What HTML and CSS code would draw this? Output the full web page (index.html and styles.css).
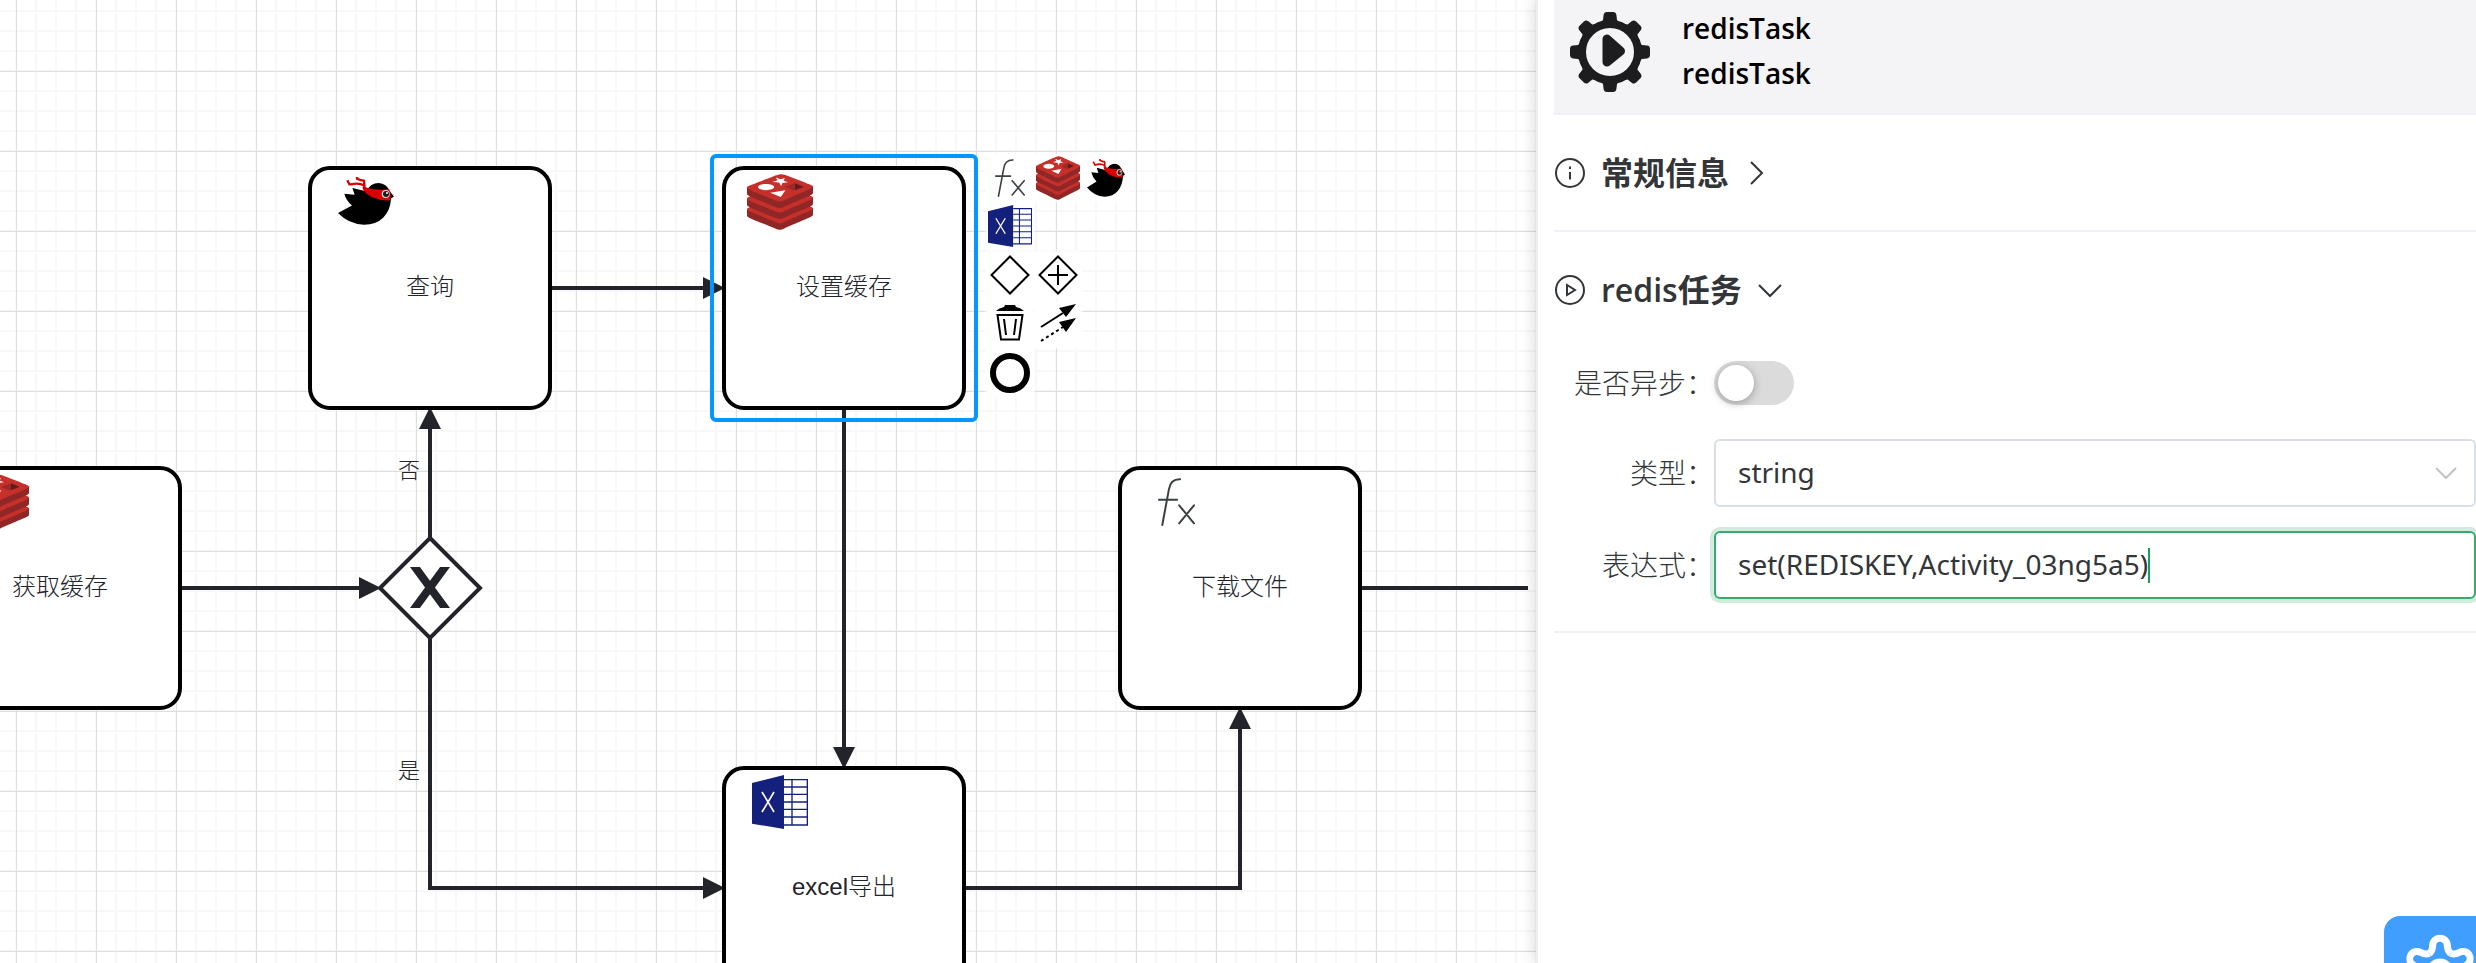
FILE: index.html
```html
<!DOCTYPE html>
<html lang="zh-CN">
<head>
<meta charset="utf-8">
<title>redisTask</title>
<link rel="stylesheet" href="styles.css">
</head>
<body>
<svg class="sprite" aria-hidden="true">
  <symbol id="i-redis" viewBox="0 0 256 220" preserveAspectRatio="none">
    <g id="redis-layer">
      <path fill="#912626" d="M245.97 168.943c-13.662 7.121-84.434 36.22-99.501 44.075-15.067 7.856-23.437 7.78-35.34 2.09-11.902-5.69-87.216-36.112-100.783-42.597C3.566 169.271 0 166.535 0 163.951v-25.876s98.05-21.345 113.879-27.024c15.828-5.679 21.32-5.884 34.79-.95 13.472 4.936 94.018 19.468 107.331 24.344l-.006 25.51c.002 2.558-3.07 5.364-10.024 8.988"/>
      <path fill="#c6302b" d="M245.965 143.22c-13.661 7.118-84.431 36.218-99.498 44.072-15.066 7.857-23.436 7.78-35.338 2.09-11.903-5.686-87.214-36.113-100.78-42.594-13.566-6.485-13.85-10.948-.524-16.166 13.326-5.22 88.224-34.605 104.055-40.284 15.828-5.677 21.319-5.884 34.789-.948 13.471 4.934 83.819 32.935 97.13 37.81 13.316 4.881 13.827 8.9.166 16.02"/>
    </g>
    <use href="#redis-layer" y="-42"/>
    <use href="#redis-layer" y="-85"/>
    <path fill="#fff" d="M159.283 32.757l-22.01 2.285-4.927 11.856-7.958-13.23-25.415-2.284 18.964-6.839-5.69-10.498 17.755 6.944 16.738-5.48-4.524 10.855 17.067 6.391M131.032 90.275L89.955 73.238l58.86-9.035-17.783 26.072M74.082 39.347c17.375 0 31.46 5.46 31.46 12.194 0 6.736-14.085 12.195-31.46 12.195s-31.46-5.46-31.46-12.195c0-6.734 14.085-12.194 31.46-12.194"/>
    <path fill="#621b1c" d="M185.295 35.998l34.836 13.766-34.806 13.753-.03-27.52"/>
    <path fill="#9a2928" d="M146.755 51.243l38.54-15.245.03 27.519-3.779 1.478-34.791-13.752"/>
  </symbol>
  <symbol id="i-bird" viewBox="0 0 168 147" preserveAspectRatio="none">
    <path d="M0 110L42 87Q24 72 19 51L50 54L43 34L84 44Q98 18 122 18Q146 20 154 42L168 60L159 66Q158 100 137 123Q115 146 78 146Q32 144 0 110Z"/>
    <path fill="#d90000" d="M74 28L90 34Q122 42 153 37Q161 50 157 71Q130 74 104 63Q82 52 74 36Z"/>
    <path fill="none" stroke="#d90000" stroke-width="7" stroke-linejoin="round" d="M80 38L78 11Q68 11 57 5V0M80 26Q62 18 48 21T34 22L28 10"/>
    <circle cx="143" cy="52" r="12" fill="#ddd"/>
    <circle cx="144" cy="52" r="9" fill="#1c1c1c"/>
    <circle cx="147" cy="49" r="3" fill="#fff"/>
  </symbol>
  <symbol id="i-excel" viewBox="0 0 168 162" preserveAspectRatio="none">
    <path fill="#13217c" d="M0 24L96 0V162L0 146Z"/>
    <path fill="none" stroke="#13217c" stroke-width="4" d="M96 14H166V150H96M96 36H166M96 58H166M96 81H166M96 103H166M96 126H166M120 14V150"/>
    <path fill="none" stroke="#fff" stroke-width="5" d="M30 51L66 111M66 51L30 111"/>
  </symbol>
  <symbol id="i-fx" viewBox="0 0 112 144" preserveAspectRatio="none">
    <path fill="none" stroke="#3b4043" stroke-width="6" stroke-linecap="round" d="M67 4Q38 3 33 34L13 141M3 65H58M64 82L109 136M109 82L64 136"/>
  </symbol>
</svg>

<main class="editor">
  <section class="canvas" aria-label="流程图">
    <svg class="edges" aria-hidden="true">
      <g class="line">
        <path d="M182 588H366M430 537V422M430 639V888H710M552 288H710M844 410V754M966 888H1240V722M1362 588H1528"/>
        <path class="gateway" d="M430 538L480 588L430 638L380 588Z"/>
      </g>
      <g class="head">
        <path d="M359 577L381 588L359 599ZM419 429L430 407L441 429ZM703 877L725 888L703 899ZM703 277L725 288L703 299ZM833 747L844 769L855 747ZM1229 729L1240 707L1251 729Z"/>
      </g>
      <svg x="410" y="567" width="40" height="41"><path class="cross" d="M2 -4L38 45M38 -4L2 45"/></svg>
    </svg>

    <div class="node n-get"><svg class="mark redis"><use href="#i-redis"/></svg>获取缓存</div>
    <div class="node n-query"><svg class="mark bird"><use href="#i-bird"/></svg>查询</div>
    <div class="node n-set"><svg class="mark redis"><use href="#i-redis"/></svg>设置缓存</div>
    <div class="node n-excel"><svg class="mark excel"><use href="#i-excel"/></svg>excel导出</div>
    <div class="node n-down"><svg class="mark fx"><use href="#i-fx"/></svg>下载文件</div>
    <span class="edge-label l-no">否</span>
    <span class="edge-label l-yes">是</span>
    <div class="selection"></div>

    <div class="pad">
      <div class="group">
        <button class="entry" aria-label="函数"><svg width="30" height="38"><use href="#i-fx"/></svg></button>
        <button class="entry" aria-label="redis"><svg width="44" height="44"><use href="#i-redis"/></svg></button>
        <button class="entry" aria-label="mybatis"><svg width="38" height="38"><use href="#i-bird"/></svg></button>
        <button class="entry" aria-label="excel"><svg width="44" height="42"><use href="#i-excel"/></svg></button>
      </div>
      <div class="group">
        <button class="entry" aria-label="网关"><svg class="thin" width="40" height="40"><path d="M20 1.500L38.500 20L20 38.500L1.500 20Z"/></svg></button>
        <button class="entry" aria-label="事件网关"><svg class="thin" width="40" height="40"><path d="M20 1.500L38.500 20L20 38.500L1.500 20ZM10 20H30M20 10V30"/></svg></button>
      </div>
      <div class="group">
        <button class="entry" aria-label="删除"><svg class="thin" width="40" height="40"><path class="solid" d="M6 7Q9 4 14 3L15 1H25L26 3Q31 4 34 7Z"/><path d="M7.500 11H32.500L29 35.500H11ZM14 15L16 31M26 15L24 31"/></svg></button>
        <button class="entry" aria-label="连接"><svg class="thin" width="40" height="40"><path d="M3 23L25 9"/><path stroke-dasharray="3 3" d="M3 37L25 23"/><path class="solid" d="M38 0L21 4L28 13ZM38 14L21 18L28 28Z"/></svg></button>
      </div>
      <div class="group">
        <button class="entry" aria-label="结束事件"><svg class="ring" width="40" height="40"><circle cx="20" cy="20" r="17"/></svg></button>
      </div>
    </div>
  </section>

  <aside class="panel">
    <header class="head-card">
      <svg class="gear" viewBox="0 0 80 80" aria-hidden="true">
        <circle cx="40" cy="40" r="28" fill="none" stroke="#1d1d1f" stroke-width="8"/>
        <g fill="#1d1d1f">
          <path id="tooth" d="M33.600 3Q34 0 37 0H43Q46 0 46.400 3L47 8Q48 10 54 12H26Q32 10 33 8Z"/>
          <use href="#tooth" transform="rotate(45 40 40)"/><use href="#tooth" transform="rotate(90 40 40)"/>
          <use href="#tooth" transform="rotate(135 40 40)"/><use href="#tooth" transform="rotate(180 40 40)"/>
          <use href="#tooth" transform="rotate(225 40 40)"/><use href="#tooth" transform="rotate(270 40 40)"/>
          <use href="#tooth" transform="rotate(315 40 40)"/>
        </g>
        <path d="M37 27V50L50.500 39Z" fill="#1d1d1f" stroke="#1d1d1f" stroke-width="9" stroke-linejoin="round"/>
      </svg>
      <div class="titles"><div>redisTask</div><div>redisTask</div></div>
    </header>

    <section class="block">
      <h2><button class="toggle" aria-expanded="false">
        <svg class="lead" viewBox="0 0 30 30"><circle cx="15" cy="15" r="14"/><path d="M15 14V21.500"/><path d="M15 8.500V11"/></svg>
        常规信息
        <svg class="chev" viewBox="0 0 24 24"><path d="M6 1L17 12L6 23"/></svg>
      </button></h2>
    </section>

    <section class="block">
      <h2><button class="toggle" aria-expanded="true">
        <svg class="lead" viewBox="0 0 30 30"><circle cx="15" cy="15" r="14"/><path d="M12 10V20L20 15Z"/></svg>
        redis任务
        <svg class="chev" viewBox="0 0 24 24"><path d="M1 7L12 18L23 7"/></svg>
      </button></h2>
      <form class="form">
        <div class="row first">
          <label for="async">是否异步：</label>
          <input class="switch" type="checkbox" role="switch" id="async">
        </div>
        <div class="row">
          <label for="type">类型：</label>
          <div class="field">
            <select id="type"><option>string</option></select>
            <svg class="drop" viewBox="0 0 22 12" aria-hidden="true"><path d="M1 1L11 11L21 1"/></svg>
          </div>
        </div>
        <div class="row">
          <label for="expr">表达式：</label>
          <div class="field focus">
            <input class="text" type="text" id="expr" value="set(REDISKEY,Activity_03ng5a5)">
            <span class="caret"></span>
          </div>
        </div>
      </form>
    </section>
  </aside>
</main>

<button class="settings" aria-label="设置">
  <svg viewBox="0 0 112 112" aria-hidden="true">
    <path id="lobe" d="M45.200 37.300C48 35.500 48.500 33 48.700 29.500A7.300 7.300 0 0 1 63.300 29.500C63.500 33 64 35.500 66.800 37.300"/>
    <use href="#lobe" transform="rotate(60 56 56)"/><use href="#lobe" transform="rotate(120 56 56)"/>
    <use href="#lobe" transform="rotate(180 56 56)"/><use href="#lobe" transform="rotate(240 56 56)"/>
    <use href="#lobe" transform="rotate(300 56 56)"/>
    <circle cx="56" cy="56" r="10"/>
  </svg>
</button>
</body>
</html>
```

FILE: styles.css
```css
* { box-sizing: border-box; }

body {
  margin: 0;
  overflow: hidden;
  background: #fff;
  font-family: "Noto Sans", "Noto Sans CJK SC", sans-serif;
  color: #333639;
}

button {
  border: 0;
  padding: 0;
  background: none;
  font: inherit;
  color: inherit;
}

svg { display: block; flex: none; }

.sprite { position: absolute; width: 0; height: 0; }

.editor { display: flex; height: 100vh; }

/* canvas */
.canvas {
  position: relative;
  flex: 1;
  min-width: 0;
  overflow: hidden;
  background:
    linear-gradient(90deg, #dedede 1px, transparent 1px) 16px 0 / 80px 80px,
    linear-gradient(#dedede 1px, transparent 1px) 0 71px / 80px 80px,
    linear-gradient(90deg, #f8f8f8 2px, transparent 2px) 15px 0 / 20px 20px,
    linear-gradient(#f8f8f8 2px, transparent 2px) 0 10px / 20px 20px,
    #fff;
  font-family: "Liberation Sans", "Noto Sans CJK SC", sans-serif;
  font-weight: 300;
  color: #22242a;
}

.edges { position: absolute; inset: 0; width: 100%; height: 100%; }
.line { fill: none; stroke: #22242a; stroke-width: 4; }
.gateway { fill: #fff; }
.head { fill: #22242a; }
.cross { stroke: #22242a; stroke-width: 8; }

.node {
  position: absolute;
  display: flex;
  align-items: center;
  justify-content: center;
  width: 244px;
  height: 244px;
  padding-bottom: 2px;
  border: 4px solid #000;
  border-radius: 22px;
  background: #fff;
  font-size: 24px;
  line-height: 28px;
}
.n-get { left: -62px; top: 466px; }
.n-query { left: 308px; top: 166px; }
.n-set { left: 722px; top: 166px; }
.n-excel { left: 722px; top: 766px; }
.n-down { left: 1118px; top: 466px; }

.mark { position: absolute; }
.mark.redis { left: 21px; top: 4px; width: 66px; height: 56px; }
.mark.bird { left: 26px; top: 7px; width: 56px; height: 48px; }
.mark.excel { left: 26px; top: 5px; width: 56px; height: 54px; }
.mark.fx { left: 36px; top: 8px; width: 37px; height: 48px; }

.edge-label { position: absolute; font-size: 22px; line-height: 28px; }
.l-no { left: 398px; top: 457px; }
.l-yes { left: 398px; top: 757px; }

.selection {
  position: absolute;
  left: 710px;
  top: 154px;
  width: 268px;
  height: 268px;
  border: 4px solid #0596ff;
  border-radius: 6px;
}

.pad {
  position: absolute;
  left: 988px;
  top: 156px;
  display: flex;
  flex-direction: column;
  gap: 5px;
  width: 140px;
}
.group { display: flex; flex-wrap: wrap; gap: 4px; }
.entry {
  display: flex;
  align-items: center;
  justify-content: center;
  width: 44px;
  height: 44px;
  background: #fff;
  box-shadow: 0 0 2px 2px #fff;
}
.thin { fill: none; stroke: #000; stroke-width: 2; }
.solid { fill: #000; stroke: none; }
.ring { fill: none; stroke: #000; stroke-width: 6; }

/* properties panel */
.panel {
  position: relative;
  flex: 0 0 940px;
  padding-left: 16px;
  border-left: 2px solid #efeff0;
  background: #fff;
  box-shadow: 0 0 16px rgba(0, 0, 0, .18);
}

.head-card {
  display: flex;
  gap: 32px;
  height: 115px;
  padding: 12px 16px;
  border-bottom: 2px solid #efeff5;
  background: #f4f4f7;
}
.gear { width: 80px; height: 80px; }
.titles {
  margin-top: -6px;
  font-family: "Open Sans", sans-serif;
  font-size: 28px;
  font-weight: 600;
  line-height: 45px;
  color: #000;
}

.block { border-bottom: 2px solid #efeff5; }
.block h2 {
  margin: 0;
  font-family: "Open Sans", "Noto Sans CJK SC", sans-serif;
  font-size: 32px;
  font-weight: 600;
  line-height: 45px;
}
.toggle {
  display: flex;
  align-items: center;
  height: 115px;
  gap: 16px;
}
.lead { width: 30px; height: 30px; margin-left: 1px; fill: none; stroke: #333639; stroke-width: 2; }
.chev { width: 24px; height: 24px; fill: none; stroke: #333639; stroke-width: 2; }

.form {
  display: flex;
  flex-direction: column;
  gap: 24px;
  padding: 4px 0 32px;
  font-size: 28px;
}
.row {
  display: grid;
  grid-template-columns: 160px 1fr;
  align-items: center;
}
.row label {
  padding-bottom: 2px;
  font-family: "Noto Sans CJK SC", sans-serif;
  font-weight: 300;
  text-align: right;
  line-height: 40px;
}
.first { height: 64px; }

.switch {
  appearance: none;
  width: 80px;
  height: 44px;
  margin: 0;
  padding: 4px;
  border-radius: 22px;
  background: #dbdbdb;
}
.switch::before {
  content: "";
  display: block;
  width: 36px;
  height: 36px;
  border-radius: 18px;
  background: #fff;
  box-shadow: 0 2px 8px rgba(0, 0, 0, .3);
}

.field {
  position: relative;
  display: flex;
  align-items: center;
  height: 68px;
  border: 2px solid #dadfe5;
  border-radius: 6px;
  background: #fff;
}
.field select {
  appearance: none;
  flex: 1;
  height: 64px;
  padding: 0 22px 2px;
  border: 0;
  background: none;
  font: inherit;
  color: inherit;
}
.drop {
  position: absolute;
  right: 17px;
  width: 22px;
  height: 12px;
  fill: none;
  stroke: #c2c2c2;
  stroke-width: 2;
}
.focus { border-color: #36ad6a; box-shadow: 0 0 0 4px #d1ebde; }
.text {
  field-sizing: content;
  height: 64px;
  padding: 0 0 2px 22px;
  border: 0;
  outline: 0;
  background: none;
  font: inherit;
  color: inherit;
}
.caret { width: 2px; height: 35px; background: #18a058; }

.settings {
  position: fixed;
  right: -20px;
  top: 916px;
  width: 112px;
  height: 112px;
  border-radius: 16px;
  background: #409eff;
}
.settings svg { width: 112px; height: 112px; fill: none; stroke: #fff; stroke-width: 7; }
```
